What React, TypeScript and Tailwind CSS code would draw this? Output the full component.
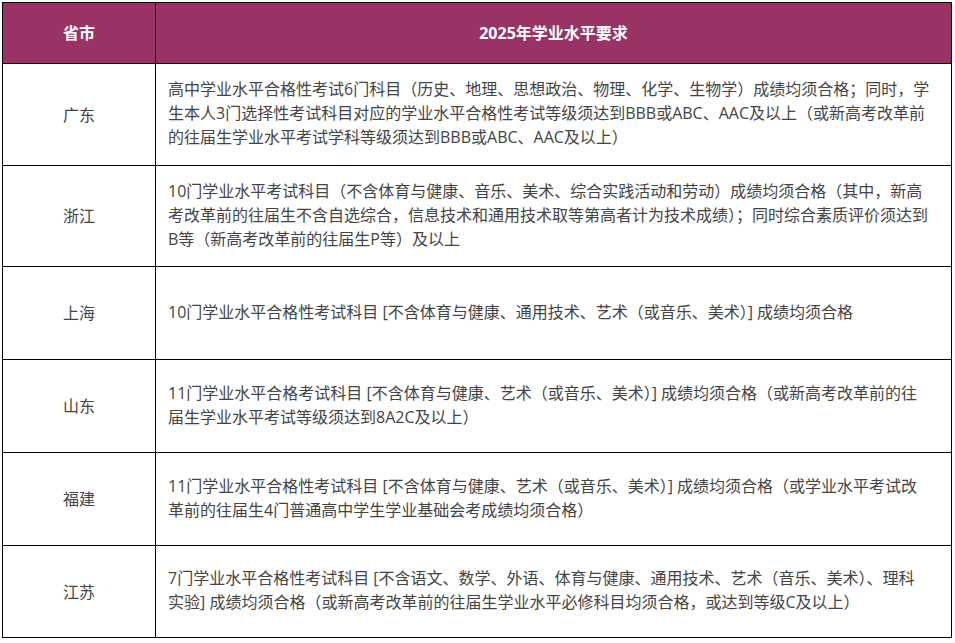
const rows: { name: string; h: string; lines: string[] }[] = [
  {
    name: '广东',
    h: 'h-[102px]',
    lines: [
      '高中学业水平合格性考试6门科目（历史、地理、思想政治、物理、化学、生物学）成绩均须合格；同时，学',
      '生本人3门选择性考试科目对应的学业水平合格性考试等级须达到BBB或ABC、AAC及以上（或新高考改革前',
      '的往届生学业水平考试学科等级须达到BBB或ABC、AAC及以上）',
    ],
  },
  {
    name: '浙江',
    h: 'h-[101px]',
    lines: [
      '10门学业水平考试科目（不含体育与健康、音乐、美术、综合实践活动和劳动）成绩均须合格（其中，新高',
      '考改革前的往届生不含自选综合，信息技术和通用技术取等第高者计为技术成绩）；同时综合素质评价须达到',
      'B等（新高考改革前的往届生P等）及以上',
    ],
  },
  {
    name: '上海',
    h: 'h-[93px]',
    lines: ['10门学业水平合格性考试科目 [不含体育与健康、通用技术、艺术（或音乐、美术）] 成绩均须合格'],
  },
  {
    name: '山东',
    h: 'h-[93px]',
    lines: [
      '11门学业水平合格考试科目 [不含体育与健康、艺术（或音乐、美术）] 成绩均须合格（或新高考改革前的往',
      '届生学业水平考试等级须达到8A2C及以上）',
    ],
  },
  {
    name: '福建',
    h: 'h-[93px]',
    lines: [
      '11门学业水平合格性考试科目 [不含体育与健康、艺术（或音乐、美术）] 成绩均须合格（或学业水平考试改',
      '革前的往届生4门普通高中学生学业基础会考成绩均须合格）',
    ],
  },
  {
    name: '江苏',
    h: 'h-[92px]',
    lines: [
      '7门学业水平合格性考试科目 [不含语文、数学、外语、体育与健康、通用技术、艺术（音乐、美术）、理科',
      '实验] 成绩均须合格（或新高考改革前的往届生学业水平必修科目均须合格，或达到等级C及以上）',
    ],
  },
];

export default function App() {
  return (
    <div className="min-h-screen bg-white pl-[2px] pt-[2px] font-['Open_Sans','Noto_Sans_CJK_SC',sans-serif] text-[16px] leading-[24px] text-[#444]">
      <div className="w-[950px] border-l border-t border-black">
        <div className="flex h-[61px] bg-[#993366] font-bold text-white">
          <div className="flex w-[153px] shrink-0 items-center justify-center border-b border-r border-black">省市</div>
          <div className="flex flex-1 items-center justify-center border-b border-r border-black">2025年学业水平要求</div>
        </div>
        {rows.map((r) => (
          <div key={r.name} className={`flex ${r.h}`}>
            <div className="flex w-[153px] shrink-0 items-center justify-center border-b border-r border-black">
              {r.name}
            </div>
            <div className="flex flex-1 flex-col justify-center border-b border-r border-black px-3 pb-[3px]">
              {r.lines.map((l, i) => (
                <div key={i} className="whitespace-nowrap">
                  {l}
                </div>
              ))}
            </div>
          </div>
        ))}
      </div>
    </div>
  );
}
